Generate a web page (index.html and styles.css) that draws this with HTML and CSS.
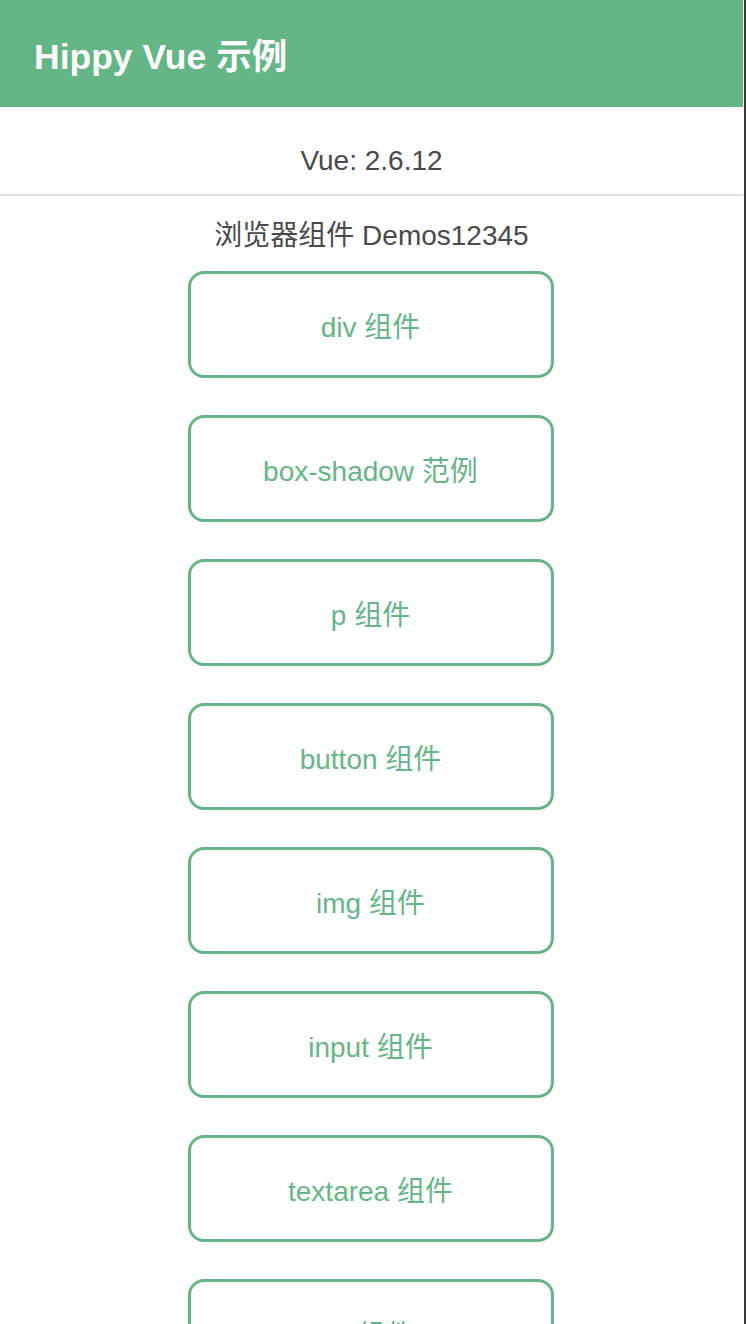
FILE: index.html
```html
<!DOCTYPE html>
<html lang="zh">
<head>
<meta charset="utf-8">
<title>Hippy Vue 示例</title>
<link rel="stylesheet" href="styles.css">
</head>
<body>
<div class="frame">
  <div class="app">
    <header class="header">Hippy Vue 示例</header>
    <div class="version">Vue: 2.6.12</div>
    <div class="heading">浏览器组件 Demos12345</div>
    <ul class="list">
      <li class="btn">div 组件</li>
      <li class="btn">box-shadow 范例</li>
      <li class="btn">p 组件</li>
      <li class="btn">button 组件</li>
      <li class="btn">img 组件</li>
      <li class="btn">input 组件</li>
      <li class="btn">textarea 组件</li>
      <li class="btn">ul 组件</li>
    </ul>
  </div>
</div>
</body>
</html>
```

FILE: styles.css
```css
html, body {
  margin: 0;
  padding: 0;
  background: #fff;
}
body {
  font-family: "Liberation Sans", "Noto Sans CJK SC", sans-serif;
  overflow: hidden;
  height: 1324px;
}
.frame {
  width: 743px;
  height: 1324px;
  padding-right: 1px;
  border-right: 2px solid #3a3a3a;
  overflow: hidden;
}
.app {
  width: 743px;
}
.header {
  height: 107px;
  background: #65b687;
  color: #fff;
  font-weight: bold;
  font-size: 35.5px;
  display: flex;
  align-items: center;
  padding-left: 34px;
  box-sizing: border-box;
}
.version {
  height: 89px;
  display: flex;
  align-items: center;
  justify-content: center;
  padding-top: 20px;
  box-sizing: border-box;
  font-size: 28px;
  color: #4a4a4a;
  border-bottom: 2px solid #e3e3e3;
}
.heading {
  padding-top: 20px;
  line-height: 40px;
  text-align: center;
  font-size: 28px;
  color: #4a4a4a;
}
.list {
  list-style: none;
  margin: 15px 0 0;
  padding: 0 2px 0 0;
  display: flex;
  flex-direction: column;
  align-items: center;
  gap: 37px;
}
.btn {
  width: 366px;
  height: 107px;
  box-sizing: border-box;
  border: 3px solid #65b687;
  border-radius: 16px;
  display: flex;
  align-items: center;
  justify-content: center;
  color: #65b687;
  font-size: 28px;
}
```
